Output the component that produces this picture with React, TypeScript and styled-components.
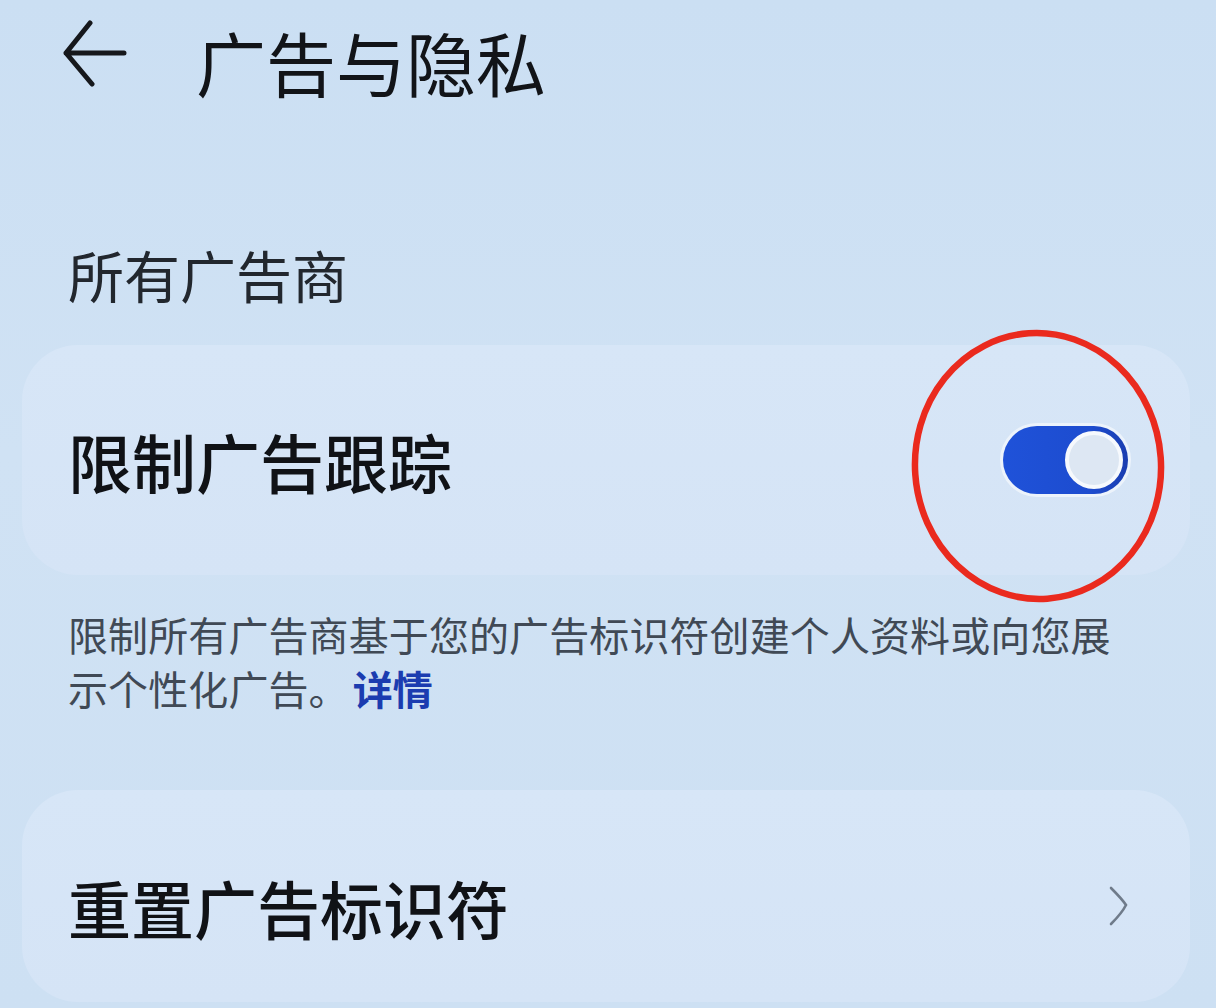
import React from "react";
import styled, { createGlobalStyle } from "styled-components";

const Global = createGlobalStyle`
  html, body { margin: 0; padding: 0; }
  body {
    background: #cde0f3;
    font-family: "Noto Sans CJK SC", "Noto Sans", sans-serif;
    color: #111418;
  }
`;

const Page = styled.div`
  position: relative;
  width: 1216px;
  height: 1008px;
  overflow: hidden;
  background: linear-gradient(180deg, #cbdff3 0%, #d0e2f4 45%, #cde0f3 100%);
  display: flex;
  flex-direction: column;
`;

const Header = styled.header`
  height: 124px;
  display: flex;
  align-items: center;
  padding-left: 62px;
  box-sizing: border-box;
`;

const BackIcon = styled.svg`
  width: 80px;
  height: 70px;
  margin-bottom: 14px;
  flex: none;
`;

const Title = styled.h1`
  margin: 0 0 0 54px;
  font-size: 70px;
  line-height: 70px;
  font-weight: 400;
  color: #121418;
`;

const SectionLabel = styled.div`
  padding: 122px 0 43px 68px;
  font-size: 56px;
  line-height: 56px;
  font-weight: 400;
  color: #22272e;
`;

const Card = styled.div<{ $height: number }>`
  margin: 0 26px 0 22px;
  height: ${(p) => p.$height}px;
  border-radius: 56px;
  background: linear-gradient(180deg, #d7e6f7 0%, #d5e4f6 100%);
  display: flex;
  align-items: center;
  justify-content: space-between;
  padding: 0 62px 0 46px;
  box-sizing: border-box;
`;

const RowLabel = styled.span<{ $size: number }>`
  font-size: ${(p) => p.$size}px;
  line-height: ${(p) => p.$size}px;
  font-weight: 500;
  color: #101216;
`;

const Track = styled.div`
  width: 125px;
  height: 68px;
  border-radius: 34px;
  background: linear-gradient(90deg, #1f52d9 0%, #1d4ccf 70%, #1a3db0 100%);
  display: flex;
  align-items: center;
  justify-content: flex-end;
  padding-right: 5px;
  box-sizing: border-box;
  box-shadow: 0 0 0 3px rgba(255, 255, 255, 0.55);
`;

const Thumb = styled.div`
  width: 58px;
  height: 58px;
  border-radius: 50%;
  background: #dde7f3;
  border: 4px solid #f6f9fd;
  box-sizing: border-box;
`;

const Description = styled.p`
  margin: 32px 80px 0 68px;
  font-size: 40px;
  line-height: 54px;
  color: #404955;
  letter-spacing: 0.1px;
`;

const Link = styled.span`
  display: inline-block;
  line-height: 54px;
  vertical-align: top;
  color: #1b3cb0;
  font-weight: 700;
  margin-left: 4px;
`;

const Spacer = styled.div<{ $h: number }>`
  height: ${(p) => p.$h}px;
  flex: none;
`;

const ResetCard = styled(Card)`
  align-items: flex-start;
  padding-top: 85px;
`;

const Chevron = styled.svg`
  width: 22px;
  height: 42px;
  margin-top: 10px;
  margin-right: -2px;
`;

const Annotation = styled.svg`
  position: absolute;
  left: 906px;
  top: 326px;
  width: 264px;
  height: 280px;
  pointer-events: none;
`;

export default function App() {
  return (
    <>
      <Global />
      <Page>
        <Header>
          <BackIcon viewBox="0 0 80 70">
            <path
              d="M28 3 L4 33 L30 64 M4 33 L62 33"
              fill="none"
              stroke="#16181c"
              strokeWidth="5"
              strokeLinecap="round"
              strokeLinejoin="round"
            />
          </BackIcon>
          <Title>广告与隐私</Title>
        </Header>

        <SectionLabel>所有广告商</SectionLabel>

        <Card $height={230}>
          <RowLabel $size={64}>限制广告跟踪</RowLabel>
          <Track>
            <Thumb />
          </Track>
        </Card>

        <Description>
          限制所有广告商基于您的广告标识符创建个人资料或向您展
          <br />
          示个性化广告。<Link>详情</Link>
        </Description>

        <Spacer $h={75} />

        <ResetCard $height={212}>
          <RowLabel $size={63}>重置广告标识符</RowLabel>
          <Chevron viewBox="0 0 22 42">
            <path
              d="M3 3 Q14 14 18 20 Q14 28 3 39"
              fill="none"
              stroke="#6f7b8a"
              strokeWidth="2.6"
              strokeLinecap="round"
            />
          </Chevron>
        </ResetCard>

        <Annotation viewBox="0 0 264 280">
          <ellipse
            cx="132"
            cy="140"
            rx="123"
            ry="133"
            transform="rotate(-4 132 140)"
            fill="none"
            stroke="#ea2a1e"
            strokeWidth="6.5"
          />
        </Annotation>
      </Page>
    </>
  );
}
